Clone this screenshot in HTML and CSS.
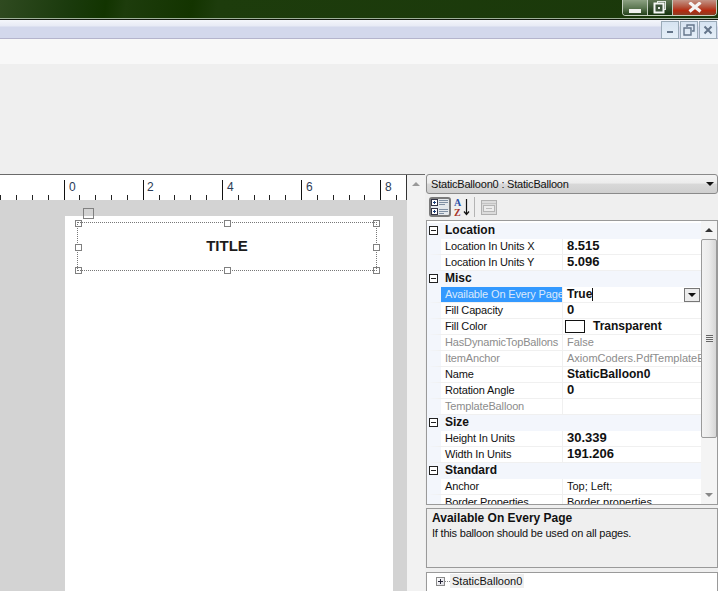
FILE: index.html
```html
<!DOCTYPE html>
<html>
<head>
  <meta charset="UTF-8" />
  <title>StaticBalloon0</title>
  <link rel="stylesheet" href="styles.css">
</head>
<body>
  <div class="titlebar">
    <div class="win-buttons">
      <div class="win-btn win-min"><span class="min-glyph"></span></div>
      <div class="win-btn win-max">
        <svg width="14" height="13" viewBox="0 0 14 13"><rect x="4.5" y="0.5" width="8" height="8" fill="#4a6244" stroke="#e0e6e0"/><rect x="1.5" y="2.5" width="9" height="9" fill="#3b5238" stroke="#f4f6f4" stroke-width="2"/><rect x="5" y="6" width="2" height="2" fill="#e8ece8"/></svg>
      </div>
      <div class="win-btn win-close">
        <svg width="16" height="11" viewBox="0 0 16 11"><path d="M2.5 0.5 L13.5 9.5 M13.5 0.5 L2.5 9.5" stroke="#f4f4f4" stroke-width="3.2"/></svg>
      </div>
    </div>
  </div>
  <div class="menuband">
    <div class="mdi-btn"><svg width="10" height="10" viewBox="0 0 10 10"><rect x="2" y="6" width="6" height="2" fill="#64758a"/></svg></div>
    <div class="mdi-btn"><svg width="12" height="12" viewBox="0 0 12 12"><path d="M4 3V1h7v6H9M1 4h7v7H1z" fill="none" stroke="#64758a" stroke-width="1.4"/></svg></div>
    <div class="mdi-btn"><svg width="10" height="10" viewBox="0 0 10 10"><path d="M1.5 1.5L8.5 8.5M8.5 1.5L1.5 8.5" stroke="#64758a" stroke-width="2"/></svg></div>
  </div>
  <div class="toolstrip"></div>
  <div class="spacer"></div>

  <div class="main">
    <div class="designer">
      <div class="ruler-row">
        <svg class="ruler" width="407" height="25" viewBox="0 1 407 25">
          <path d="M64.5 6V26M143.5 6V26M222.5 6V26M301.5 6V26M380.5 6V26" stroke="#111" fill="none"/>
          <path d="M0.5 21V26M16.5 21V26M32.5 21V26M48.5 21V26M79.5 21V26M95.5 21V26M111.5 21V26M127.5 21V26M159.5 21V26M174.5 21V26M190.5 21V26M206.5 21V26M238.5 21V26M254.5 21V26M269.5 21V26M285.5 21V26M317.5 21V26M333.5 21V26M349.5 21V26M364.5 21V26M396.5 21V26" stroke="#222" fill="none"/>
          <path d="M406.5 0V26" stroke="#333" fill="none"/>
          <text x="69" y="17">0</text>
          <text x="147" y="17">2</text>
          <text x="227" y="17">4</text>
          <text x="306" y="17">6</text>
          <text x="385" y="17">8</text>
        </svg>
        <div class="ruler-arrow"><span class="arrow-up arrow-light"></span></div>
      </div>
      <div class="canvas-row">
        <div class="canvas">
          <div class="page"></div>
          <div class="rotate-box"></div>
          <div class="balloon">TITLE</div>
          <span class="handle handle-corner h-tl"></span>
          <span class="handle h-tc"></span>
          <span class="handle handle-corner h-tr"></span>
          <span class="handle h-ml"></span>
          <span class="handle h-mr"></span>
          <span class="handle handle-corner h-bl"></span>
          <span class="handle h-bc"></span>
          <span class="handle handle-corner h-br"></span>
        </div>
        <div class="canvas-scroll"></div>
      </div>
    </div>

    <div class="props">
      <div class="combo">
        <span class="combo-text">StaticBalloon0 : StaticBalloon</span>
        <span class="arrow-down"></span>
      </div>
      <div class="prop-toolbar">
        <div class="tool-btn">
          <svg width="18" height="16" viewBox="0 0 18 16">
            <rect x="0.5" y="0.5" width="6" height="6" fill="#fff" stroke="#334"/><path d="M2 3.5h3M3.5 2v3" stroke="#1d3f7a"/>
            <rect x="0.5" y="9.5" width="6" height="6" fill="#fff" stroke="#334"/><path d="M2 12.5h3M3.5 11v3" stroke="#1d3f7a"/>
            <path d="M8 1.5h9M8 3.5h9M8 5.5h6M8 10.5h9M8 12.5h9M8 14.5h5" stroke="#8090a4"/>
          </svg>
        </div>
        <div class="tool-az">
          <svg width="18" height="20" viewBox="0 0 18 20">
            <text class="az-a" x="1" y="9">A</text>
            <text class="az-z" x="1" y="19">Z</text>
            <path d="M13.5 2V17M11 14.5l2.5 3 2.5-3" stroke="#111" stroke-width="1.2" fill="none"/>
          </svg>
        </div>
        <div class="tool-sep"></div>
        <div class="tool-pages">
          <svg width="16" height="15" viewBox="0 0 16 15">
            <rect x="0.5" y="0.5" width="15" height="14" fill="#dcdcdc" stroke="#b0b0b0"/>
            <path d="M1 3.5h14" stroke="#c4c4c4"/>
            <rect x="2.5" y="5.5" width="11" height="6" fill="#ececec" stroke="#b5b5b5"/>
            <path d="M5 8.5h6" stroke="#bdbdbd"/>
          </svg>
        </div>
      </div>
      <div class="grid">
        <div class="grid-rows">
          <div class="cat"><span class="minus"></span>Location</div>
          <div class="row"><div class="name">Location In Units X</div><div class="val num">8.515</div></div>
          <div class="row"><div class="name">Location In Units Y</div><div class="val num">5.096</div></div>
          <div class="cat"><span class="minus"></span>Misc</div>
          <div class="row row-sel">
            <div class="name">Available On Every Page</div>
            <div class="val">True<span class="caret"></span></div>
            <div class="drop-btn"><span class="arrow-down"></span></div>
          </div>
          <div class="row"><div class="name">Fill Capacity</div><div class="val num">0</div></div>
          <div class="row"><div class="name">Fill Color</div><div class="val"><span class="swatch"></span>Transparent</div></div>
          <div class="row row-off"><div class="name">HasDynamicTopBallons</div><div class="val">False</div></div>
          <div class="row row-off"><div class="name">ItemAnchor</div><div class="val">AxiomCoders.PdfTemplateEditor</div></div>
          <div class="row"><div class="name">Name</div><div class="val">StaticBalloon0</div></div>
          <div class="row"><div class="name">Rotation Angle</div><div class="val num">0</div></div>
          <div class="row row-off"><div class="name">TemplateBalloon</div><div class="val"></div></div>
          <div class="cat"><span class="minus"></span>Size</div>
          <div class="row"><div class="name">Height In Units</div><div class="val num">30.339</div></div>
          <div class="row"><div class="name">Width In Units</div><div class="val num">191.206</div></div>
          <div class="cat"><span class="minus"></span>Standard</div>
          <div class="row row-plain"><div class="name">Anchor</div><div class="val">Top; Left;</div></div>
          <div class="row row-plain"><div class="name">Border Properties</div><div class="val">Border properties</div></div>
        </div>
        <div class="grid-scroll">
          <div class="scroll-end"><span class="arrow-up"></span></div>
          <div class="scroll-thumb"><span class="grip"></span></div>
          <div class="scroll-track"></div>
          <div class="scroll-end"><span class="arrow-down arrow-light"></span></div>
        </div>
      </div>
      <div class="desc">
        <div class="desc-title">Available On Every Page</div>
        <div class="desc-text">If this balloon should be used on all pages.</div>
      </div>
      <div class="tree">
        <span class="plus"></span><span class="tree-dots"></span><span class="tree-label">StaticBalloon0</span>
      </div>
    </div>
  </div>
</body>
</html>
```

FILE: styles.css
```css
html, body {
  margin: 0;
  height: 591px;
  overflow: hidden;
}
body {
  width: 718px;
  background: #efefef;
  font-family: "Liberation Sans", Arial, sans-serif;
  font-size: 11px;
  color: #111;
  display: flex;
  flex-direction: column;
}

/* window chrome */
.titlebar {
  height: 18px;
  flex: none;
  display: flex;
  justify-content: flex-end;
  align-items: flex-start;
  padding-right: 1px;
  background: linear-gradient(100deg, #2f4a20 0, #1a3a0c 70px, #123400 105px, #1d3c0c 125px, #133400 190px, #1d3c0c 215px, #1a380a 100%);
  border-bottom: 1px solid #9fb09a;
}
.win-buttons {
  display: flex;
  height: 15px;
  border: 1px solid #c5d0c0;
  border-top: none;
  border-radius: 0 0 4px 4px;
  overflow: hidden;
  background: #0f2c05;
}
.win-btn {
  height: 15px;
  display: flex;
  align-items: center;
  justify-content: center;
  border-right: 1px solid #c0ccbc;
}
.win-min {
  width: 24px;
  background: linear-gradient(#8ca182, #5f7a55 50%, #24401a);
}
.win-max {
  width: 24px;
  background: linear-gradient(#5d7452, #334d2c 55%, #16330c);
}
.win-close {
  width: 43px;
  border-right: none;
  background: linear-gradient(#c39385, #b4553f 45%, #b52a10 70%, #8e3d22);
}
.min-glyph {
  width: 12px;
  height: 4px;
  margin-top: 7px;
  background: #f0f2ee;
}
.menuband {
  height: 20px;
  flex: none;
  display: flex;
  justify-content: flex-end;
  gap: 1px;
  padding: 1px 0 0;
  border-top: 1px solid #10170c;
  border-bottom: 1px solid #b4b4cc;
  box-sizing: border-box;
  background: linear-gradient(#f4f6fb 0, #e7eaf5 6px, #d3d8ec 7px, #d3d8ec 100%);
}
.mdi-btn {
  width: 18px;
  height: 18px;
  flex: none;
  box-sizing: border-box;
  border: 1px solid #9aaab8;
  display: flex;
  align-items: center;
  justify-content: center;
  background: linear-gradient(#d6e3f1, #e6eff8);
}
.mdi-btn:last-child {
  margin-right: 1px;
}
.toolstrip {
  height: 25px;
  flex: none;
  background: #f8f8f8;
}
.spacer {
  height: 110px;
  flex: none;
  background: #efefef;
}

/* main area */
.main {
  flex: 1;
  display: flex;
  min-height: 0;
}
.designer {
  width: 425px;
  flex: none;
  display: flex;
  flex-direction: column;
  box-sizing: border-box;
}
.ruler-row {
  height: 26px;
  flex: none;
  display: flex;
  box-sizing: border-box;
  border-top: 1px solid #6a6a6a;
}
.ruler {
  display: block;
  flex: none;
  background: #fff;
}
.ruler text {
  font-family: "Liberation Sans", Arial, sans-serif;
  font-size: 12px;
  fill: #2b3b55;
}
.ruler-arrow {
  flex: 1;
  background: #f2f2f2;
  display: flex;
  justify-content: center;
  padding-top: 7px;
  box-sizing: border-box;
}
.canvas-row {
  flex: 1;
  display: flex;
}
.canvas {
  width: 407px;
  flex: none;
  position: relative;
  background: #d3d3d3;
  overflow: hidden;
}
.canvas-scroll {
  flex: 1;
  background: #f2f2f2;
}
.page {
  position: absolute;
  left: 65px;
  top: 16px;
  width: 328px;
  bottom: 0;
  background: #fff;
}
.rotate-box {
  position: absolute;
  left: 83px;
  top: 8px;
  width: 9px;
  height: 9px;
  border: 1px solid #808080;
}
.balloon {
  position: absolute;
  left: 77px;
  top: 22px;
  width: 298px;
  height: 45px;
  padding-bottom: 2px;
  border: 1px dotted #777;
  display: flex;
  align-items: center;
  justify-content: center;
  font-size: 15px;
  font-weight: bold;
  color: #1c1c1c;
}
.handle {
  position: absolute;
  width: 5px;
  height: 5px;
  border: 1px solid #808080;
  background: #fff;
}
.handle-corner {
  background: transparent;
}
.h-tl { left: 75px; top: 20px; }
.h-tc { left: 224px; top: 20px; }
.h-tr { left: 373px; top: 20px; }
.h-ml { left: 75px; top: 44px; }
.h-mr { left: 373px; top: 44px; }
.h-bl { left: 75px; top: 67px; }
.h-bc { left: 224px; top: 67px; }
.h-br { left: 373px; top: 67px; }

/* property panel */
.props {
  flex: 1;
  min-width: 0;
  margin-left: 1px;
  display: flex;
  flex-direction: column;
}
.combo {
  height: 20px;
  flex: none;
  box-sizing: border-box;
  border: 1px solid #8a8a8a;
  border-radius: 3px;
  padding: 0 3px 0 4px;
  display: flex;
  align-items: center;
  justify-content: space-between;
  background: linear-gradient(#f3f3f3 0, #ececec 45%, #d8d8d8 50%, #cfcfcf 100%);
}
.combo-text {
  letter-spacing: -0.2px;
}
.arrow-down, .arrow-up {
  display: inline-block;
  width: 0;
  height: 0;
  border-left: 4px solid transparent;
  border-right: 4px solid transparent;
}
.arrow-down {
  border-top: 4px solid #111;
}
.arrow-up {
  border-bottom: 4px solid #333;
}
.arrow-down.arrow-light {
  border-top-color: #888;
}
.arrow-up.arrow-light {
  border-bottom-color: #999;
}
.prop-toolbar {
  height: 26px;
  flex: none;
  display: flex;
  align-items: center;
  padding-left: 3px;
  box-sizing: border-box;
  background: #efefef;
}
.tool-btn {
  width: 22px;
  height: 20px;
  box-sizing: border-box;
  border: 2px solid #7a7a7a;
  border-radius: 3px;
  background: #e4e8ec;
  display: flex;
  align-items: center;
  justify-content: center;
}
.tool-az {
  margin-left: 2px;
  width: 18px;
  height: 20px;
}
.tool-az svg, .tool-pages svg {
  display: block;
}
.az-a, .az-z {
  font-family: "Liberation Serif", serif;
  font-size: 10px;
  font-weight: bold;
}
.az-a { fill: #2a4fa8; }
.az-z { fill: #a8342a; }
.tool-sep {
  width: 1px;
  height: 20px;
  margin: 0 6px 0 3px;
  background: #b4b4b4;
}
.grid {
  height: 285px;
  flex: none;
  display: flex;
  box-sizing: border-box;
  border: 1px solid #9a9a9a;
  background: #fff;
  overflow: hidden;
}
.grid-rows {
  width: 274px;
  flex: none;
  padding-top: 2px;
}
.cat {
  height: 16px;
  box-sizing: border-box;
  padding-bottom: 2px;
  display: flex;
  align-items: center;
  font-size: 12px;
  font-weight: bold;
  background: #f3f6fc;
}
.minus {
  width: 9px;
  height: 9px;
  box-sizing: border-box;
  border: 1px solid #222;
  margin: 0 7px 0 2px;
  position: relative;
  background: #fff;
}
.minus::after {
  content: "";
  position: absolute;
  left: 1px;
  right: 1px;
  top: 3px;
  height: 1px;
  background: #222;
}
.row {
  height: 16px;
  display: flex;
  box-sizing: border-box;
  border-left: 14px solid #f3f6fc;
  border-bottom: 1px solid #f0f0f0;
  position: relative;
}
.name {
  width: 122px;
  flex: none;
  box-sizing: border-box;
  padding-left: 4px;
  border-right: 1px solid #f0f0f0;
  letter-spacing: -0.15px;
  line-height: 15px;
  white-space: nowrap;
  overflow: hidden;
}
.val {
  flex: 1;
  min-width: 0;
  padding-left: 4px;
  font-size: 12px;
  font-weight: bold;
  line-height: 15px;
  white-space: nowrap;
  overflow: hidden;
  display: flex;
  align-items: center;
}
.val.num {
  font-size: 13px;
  padding-bottom: 2px;
}
.row-off .name, .row-off .val {
  color: #8c8c8c;
  font-size: 11px;
  font-weight: normal;
}
.row-plain .val {
  font-size: 11px;
  font-weight: normal;
}
.row-sel .name {
  background: #3399ff;
  color: #dbe9fb;
}
.caret {
  width: 1px;
  height: 13px;
  background: #111;
}
.swatch {
  width: 20px;
  height: 13px;
  box-sizing: border-box;
  border: 1px solid #111;
  background: #fff;
  margin: 0 8px 0 -2px;
  flex: none;
}
.drop-btn {
  position: absolute;
  right: 1px;
  top: 1px;
  width: 16px;
  height: 14px;
  box-sizing: border-box;
  border: 1px solid #777;
  background: #ececec;
  display: flex;
  align-items: center;
  justify-content: center;
}
.grid-scroll {
  flex: 1;
  display: flex;
  flex-direction: column;
  background: #f4f4f4;
}
.scroll-end {
  height: 18px;
  flex: none;
  display: flex;
  align-items: center;
  justify-content: center;
}
.scroll-thumb {
  height: 199px;
  flex: none;
  box-sizing: border-box;
  border: 1px solid #9a9a9a;
  border-radius: 2px;
  background: linear-gradient(90deg, #f2f2f2, #ebebeb 50%, #d6d6d6);
  display: flex;
  align-items: center;
  justify-content: center;
}
.grip {
  width: 7px;
  height: 7px;
  background: repeating-linear-gradient(#666 0, #666 1px, #eee 1px, #eee 2px);
}
.scroll-track {
  flex: 1;
}
.desc {
  height: 60px;
  flex: none;
  margin-top: 3px;
  box-sizing: border-box;
  border: 1px solid #9a9a9a;
  padding: 2px 5px;
  background: #efefef;
}
.desc-title {
  font-size: 12px;
  font-weight: bold;
  line-height: 15px;
}
.desc-text {
  letter-spacing: -0.2px;
  line-height: 15px;
}
.tree {
  flex: 1;
  margin-top: 4px;
  padding: 0 0 2px 9px;
  box-sizing: border-box;
  border: 1px solid #9a9a9a;
  border-bottom: none;
  background: #fff;
  display: flex;
  align-items: center;
}
.plus {
  width: 9px;
  height: 9px;
  box-sizing: border-box;
  border: 1px solid #8a8a8a;
  background: linear-gradient(135deg, #fff, #dcdce4);
  position: relative;
}
.plus::before {
  content: "";
  position: absolute;
  left: 1px;
  right: 1px;
  top: 3px;
  height: 1px;
  background: #223;
}
.plus::after {
  content: "";
  position: absolute;
  top: 1px;
  bottom: 1px;
  left: 3px;
  width: 1px;
  background: #223;
}
.tree-dots {
  width: 5px;
  border-top: 1px dotted #888;
}
.tree-label {
  background: #efefef;
  padding: 1px 2px;
}
```
